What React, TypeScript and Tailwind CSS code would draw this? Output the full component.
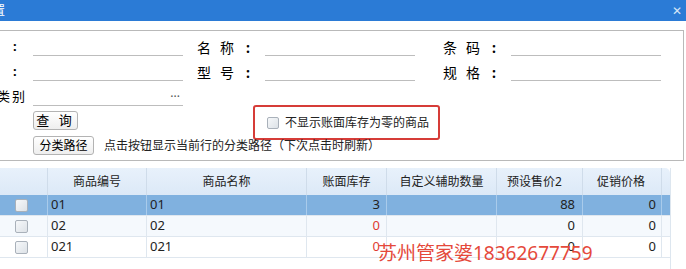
import React from 'react';

const font = { fontFamily: '"Noto Sans", "Noto Sans CJK SC", sans-serif' };

const rows = [
  { code: '01', name: '01', stock: '3', aux: '', price: '88', promo: '0', selected: true, bg: 'bg-[#80b1df]' },
  { code: '02', name: '02', stock: '0', aux: '', price: '0', promo: '0', selected: false, bg: 'bg-[#f5f9fd]' },
  { code: '021', name: '021', stock: '0', aux: '', price: '0', promo: '0', selected: false, bg: 'bg-white' },
];

function Label({ a, b }: { a: string; b: string }) {
  return (
    <div className="flex w-[68px] items-center text-[14px] text-black">
      <span className="w-[23px]">{a}</span>
      <span className="w-[26px]">{b}</span>
      <span className="font-bold">:</span>
    </div>
  );
}

function Field({ dots }: { dots?: boolean }) {
  return (
    <div className="flex h-[18px] w-[150px] items-end justify-end border-b border-[#bdbdbd] pb-[2px] pr-[3px] text-[12px] leading-none text-[#555]">
      {dots ? '···' : null}
    </div>
  );
}

function Box({ big }: { big?: boolean }) {
  return (
    <div
      className={`${big ? 'h-[13px] w-[13px]' : 'h-[12px] w-[12px]'} rounded-[2px] border border-[#a9b1ba] bg-gradient-to-br from-[#f6f8fa] to-[#dde2e7]`}
    />
  );
}

export default function App() {
  return (
    <div className="relative h-[269px] w-[686px] overflow-hidden bg-white" style={font}>
      <div className="flex h-[21px] items-center justify-between bg-[#2b7bd6] text-white">
        <span className="-ml-[7px] text-[12px]">置</span>
        <span className="mr-[4px] text-[12px] leading-none text-[#d5e5f8]">✕</span>
      </div>

      <div className="mr-[2px] mt-[9px] h-[131px] border-y border-r border-[#b9b9b9] pt-[7px]">
        <div className="flex h-[18px] items-center">
          <span className="w-[33px] pl-[13px] text-[13px] font-bold">:</span>
          <Field />
          <div className="w-[14px]" />
          <Label a="名" b="称" />
          <Field />
          <div className="w-[28px]" />
          <Label a="条" b="码" />
          <Field />
        </div>
        <div className="mt-[7px] flex h-[18px] items-center">
          <span className="w-[33px] pl-[13px] text-[13px] font-bold">:</span>
          <Field />
          <div className="w-[14px]" />
          <Label a="型" b="号" />
          <Field />
          <div className="w-[28px]" />
          <Label a="规" b="格" />
          <Field />
        </div>
        <div className="mt-[7px] flex h-[18px] items-center">
          <div className="flex w-[33px] text-[13px]">
            <span className="-ml-[3px] w-[15px]">类</span>
            <span>别</span>
          </div>
          <Field dots />
        </div>
        <div className="mt-[5px] flex h-[19px] items-start">
          <button className="ml-[33px] flex h-[19px] w-[45px] items-center justify-center rounded-[3px] border border-[#b3b3b3] bg-gradient-to-b from-white to-[#eeeeee] text-[13px] tracking-[3px]">
            查 询
          </button>
          <div className="-mt-[6px] ml-[175px] flex h-[35px] w-[187px] items-center rounded-[3px] border-2 border-[#d63c38] pl-[12px]">
            <Box />
            <span className="ml-[6px] text-[12px] text-[#222]">不显示账面库存为零的商品</span>
          </div>
        </div>
        <div className="mt-[6px] flex h-[19px] items-center">
          <button className="ml-[33px] flex h-[19px] w-[61px] items-center justify-center rounded-[3px] border border-[#b3b3b3] bg-gradient-to-b from-white to-[#eeeeee] text-[12px]">
            分类路径
          </button>
          <span className="ml-[10px] text-[12px] text-[#222]">点击按钮显示当前行的分类路径（下次点击时刷新）</span>
        </div>
      </div>

      <div className="mt-[7px] w-[671px] border-r border-[#dde6ef] pb-[20px]">
        <div className="grid h-[27px] grid-cols-[48px_99px_160px_80px_110px_86px_79px_9px] rounded-tr-[5px] bg-gradient-to-b from-[#e8f1fb] to-[#dce9f7] text-[12px] text-[#222]">
          <div className="border-r border-[#cfdcea]" />
          <div className="flex items-center justify-center border-r border-[#cfdcea]">商品编号</div>
          <div className="flex items-center justify-center border-r border-[#cfdcea]">商品名称</div>
          <div className="flex items-center justify-center border-r border-[#cfdcea]">账面库存</div>
          <div className="flex items-center justify-center border-r border-[#cfdcea]">自定义辅助数量</div>
          <div className="flex items-center pl-[10px] border-r border-[#cfdcea]">预设售价2</div>
          <div className="flex items-center pl-[14px] border-r border-[#cfdcea]">促销价格</div>
          <div />
        </div>
        {rows.map((r) => {
          const line = r.selected ? 'border-[#a9cbeb]' : 'border-[#dfe7ef]';
          return (
            <div
              key={r.code}
              className={`grid h-[21px] grid-cols-[48px_99px_160px_80px_110px_86px_79px_9px] border-b border-[#dfe7ef] text-[13px] text-[#222] ${r.bg}`}
            >
              <div className={`flex items-center pl-[15px] border-r ${line}`}>
                <Box big />
              </div>
              <div className={`flex items-center pl-[3px] border-r ${line}`}>{r.code}</div>
              <div className={`flex items-center pl-[3px] border-r ${line}`}>{r.name}</div>
              <div className={`flex items-center justify-end pr-[6px] border-r ${line} ${r.stock === '0' ? 'text-[#e03a32]' : ''}`}>
                {r.stock}
              </div>
              <div className={`flex items-center justify-end pr-[6px] border-r ${line}`}>{r.aux}</div>
              <div className={`flex items-center justify-end pr-[7px] border-r ${line}`}>{r.price}</div>
              <div className={`flex items-center justify-end pr-[5px] border-r ${line}`}>{r.promo}</div>
              <div />
            </div>
          );
        })}
      </div>

      <div className="absolute left-[378px] top-[244px] text-[19px] leading-[19px] text-[#e5493b]">
        苏州管家婆18362677759
      </div>
    </div>
  );
}
